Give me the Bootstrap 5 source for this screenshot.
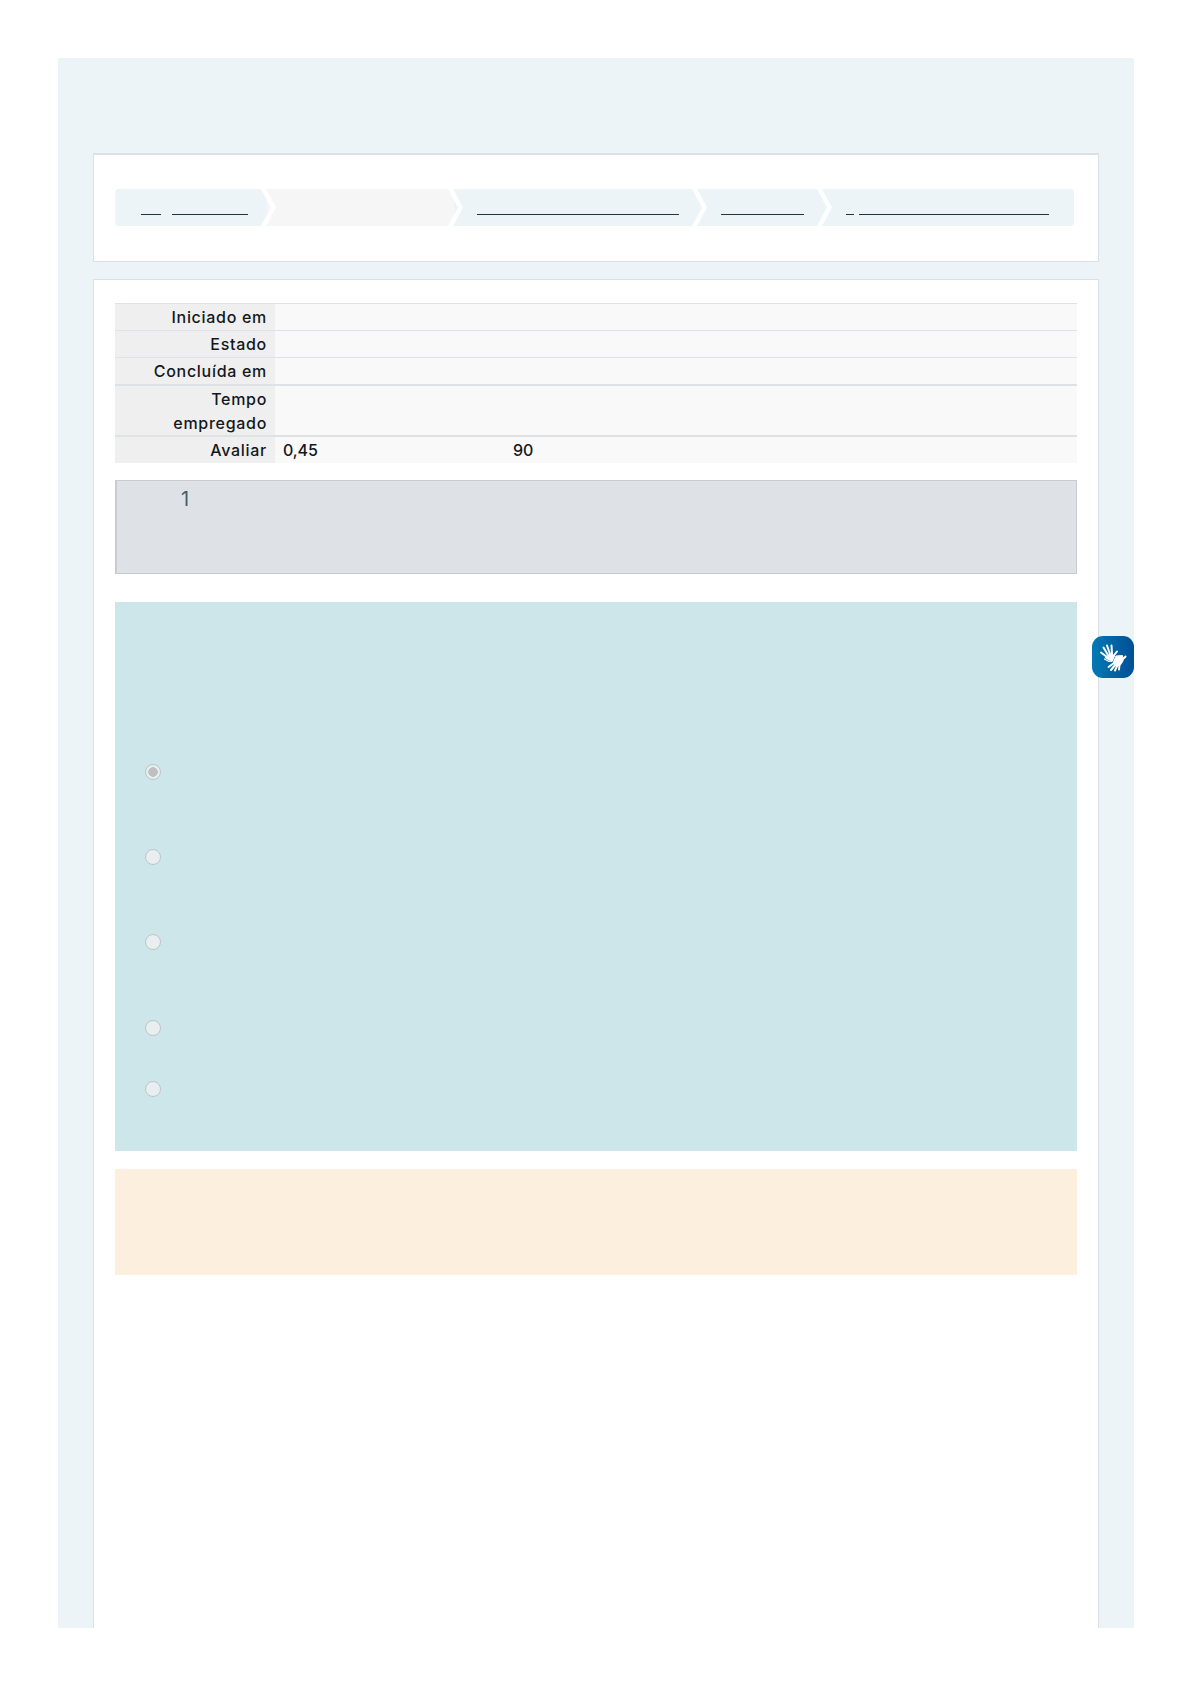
<!DOCTYPE html>
<html lang="pt-BR">
<head>
<meta charset="utf-8">
<title>Revisão</title>
<link href="https://cdn.jsdelivr.net/npm/bootstrap@5.3.0/dist/css/bootstrap.min.css" rel="stylesheet">
<style>
html,body{background:#fff;}
body{font-family:"Inter","Noto Sans","Liberation Sans",sans-serif;color:#14181c;height:1684px;padding:58px 56px 56px 58px;overflow:hidden;}
.shell{position:relative;background:#ecf4f7;height:1570px;padding:95px 35px 0;overflow:hidden;}
.panel{border:1px solid #d9e1e5;border-radius:0;background:#fff;}
.panel-crumb{height:109px;padding:34px 24px 0 21px;border-top-width:2px;margin-bottom:17px;}
.panel-main{height:1400px;padding:23px 21px 0;}
.crumb-bar{height:37px;display:flex;border-radius:4px;overflow:hidden;}
.seg{position:relative;background:#ecf4f7;height:37px;padding-top:25px;display:flex;flex:none;}
.seg-grey{background:#f6f6f6;}
.seg::after{content:"";position:absolute;top:0;right:-9px;width:15px;height:37px;z-index:2;background:#fff;clip-path:polygon(0 0,5px 0,15px 50%,5px 100%,0 100%,10px 50%);}
.seg:last-child::after{display:none;}
.s1{width:152px;padding-left:26px;}
.s2{width:187px;}
.s3{width:244px;padding-left:23px;}
.s4{width:125px;padding-left:23px;}
.s5{width:251px;padding-left:23px;}
.rule{display:block;height:1px;background:#1f3347;flex:none;}
.info-table{width:962px;margin:0 0 17px;font-size:16px;line-height:24px;font-weight:500;letter-spacing:.7px;table-layout:fixed;--bs-table-bg:transparent;color:#14181c;}
.info-table th,.info-table td{padding:1px 8px 1px;border:0;border-top:1px solid #dee2e6;vertical-align:top;box-shadow:none;}
.info-table th{width:160px;background:#efefef;text-align:right;font-weight:500;}
.info-table td{background:#f9f9f9;letter-spacing:-.1px;}
.info-table tr.thick>*{border-top-width:2px;}
.info-table tr.thick-tall>*{padding-bottom:0;}
.grade{display:inline-block;width:230px;}
.qinfo{height:94px;background:#dee2e6;border:1px solid #c8ccd1;border-left-width:2px;padding:4px 0 0 64px;font-size:20px;line-height:28px;color:#4a5b6b;margin-bottom:28px;}
.qbody{height:549px;background:#cde6ea;padding:162px 0 0 30px;margin-bottom:18px;}
.opt{display:flex;align-items:flex-start;}
.o1,.o2{height:85px;}
.o3{height:86px;}
.o4{height:61px;}
.form-check-input.radio-mute{width:16px;height:16px;margin:0;border:1px solid #bfc4c6;background-color:#e9eef1;opacity:1;background-image:none;}
.form-check-input.radio-mute:checked{background-color:#e9eef1;background-image:radial-gradient(circle,#bcc0c3 0,#bcc0c3 4.5px,transparent 5px);border-color:#bfc4c6;}
.qfeedback{height:106px;background:#fcefdd;}
.vlibras{position:absolute;right:0;top:578px;width:42px;height:42px;border-radius:11px;background:linear-gradient(90deg,#0379b5,#004f95);z-index:5;}
.vlibras svg{display:block;}
</style>
</head>
<body>
<div class="shell">
  <div class="card panel panel-crumb">
    <nav class="crumb-bar" aria-label="Trilha">
      <div class="seg s1"><span class="rule" style="width:20px;margin-right:11px"></span><span class="rule" style="width:76px"></span></div>
      <div class="seg s2 seg-grey"></div>
      <div class="seg s3"><span class="rule" style="width:202px"></span></div>
      <div class="seg s4"><span class="rule" style="width:83px"></span></div>
      <div class="seg s5"><span class="rule" style="width:8px;margin-right:5px"></span><span class="rule" style="width:190px"></span></div>
    </nav>
  </div>
  <div class="card panel panel-main">
    <table class="table info-table">
      <tbody>
        <tr><th scope="row">Iniciado em</th><td></td></tr>
        <tr><th scope="row">Estado</th><td></td></tr>
        <tr><th scope="row">Concluída em</th><td></td></tr>
        <tr class="thick thick-tall"><th scope="row">Tempo empregado</th><td></td></tr>
        <tr class="thick"><th scope="row">Avaliar</th><td><span class="grade">0,45</span><span>90</span></td></tr>
      </tbody>
    </table>
    <div class="qinfo">1</div>
    <div class="qbody">
      <div class="opt o1"><input class="form-check-input radio-mute" type="radio" name="q1" checked disabled aria-label="a"></div>
      <div class="opt o2"><input class="form-check-input radio-mute" type="radio" name="q1" disabled aria-label="b"></div>
      <div class="opt o3"><input class="form-check-input radio-mute" type="radio" name="q1" disabled aria-label="c"></div>
      <div class="opt o4"><input class="form-check-input radio-mute" type="radio" name="q1" disabled aria-label="d"></div>
      <div class="opt"><input class="form-check-input radio-mute" type="radio" name="q1" disabled aria-label="e"></div>
    </div>
    <div class="qfeedback"></div>
  </div>
  <div class="vlibras" role="img" aria-label="Libras">
    <svg width="42" height="42" viewBox="0 0 42 42" fill="none" stroke="#fff" stroke-linecap="round" stroke-linejoin="round">
      <g stroke-width="2">
        <path d="M15 21L9 16.500M16 19L11.500 11.500M18 18L15 9.500M20 18L19.500 9.500"/>
        <path d="M21.500 20L25 15.500"/>
      </g>
      <path d="M17 24L13 21.500L19.500 17.500L22.500 20L20 25.500Z" fill="#fff" stroke-width="1"/>
      <path d="M12.500 23L17 25.500L21 24" stroke-width="1.300"/>
      <g stroke-width="2">
        <path d="M22 27L16.500 31M23.500 28.500L19 34M25.500 29L23 34.500M27.500 28.500L27 33.500"/>
        <path d="M30 24L33.500 20.500"/>
      </g>
      <path d="M21.500 26L24 20L30.500 19.500L31 25L28 29.500L23.500 29Z" fill="#fff" stroke-width="1"/>
    </svg>
  </div>
</div>
<script src="https://cdn.jsdelivr.net/npm/bootstrap@5.3.0/dist/js/bootstrap.bundle.min.js"></script>
</body>
</html>
